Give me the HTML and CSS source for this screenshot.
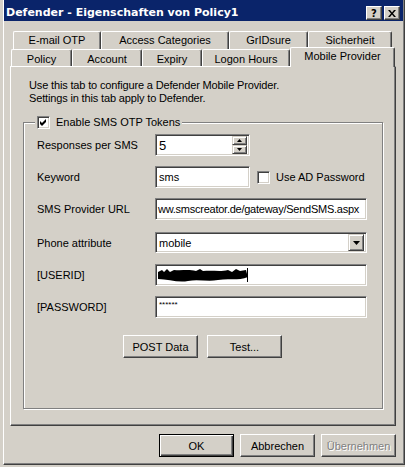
FILE: index.html
```html
<!DOCTYPE html>
<html lang="de">
<head>
    <meta charset="UTF-8">
    <title>Defender - Eigenschaften von Policy1</title>
    <link rel="stylesheet" href="styles.css">
</head>
<body>
    <div class="dialog">
        <div class="titlebar">
            <span class="title">Defender - Eigenschaften von Policy1</span>
            <div class="caption-buttons">
                <button class="cap-btn help">?</button>
                <button class="cap-btn close">
                    <svg width="8" height="7" viewBox="0 0 8 7"><path d="M0 0h2l2 2.5L6 0h2L5 3.5 8 7H6L4 4.5 2 7H0l3-3.5z" fill="#000"/></svg>
                </button>
            </div>
        </div>

        <div class="tabs">
            <div class="tab-row back">
                <div class="tab t-email">E-mail OTP</div>
                <div class="tab t-access">Access Categories</div>
                <div class="tab t-grid">GrIDsure</div>
                <div class="tab t-sich">Sicherheit</div>
            </div>
            <div class="tab-row front">
                <div class="tab t-policy">Policy</div>
                <div class="tab t-account">Account</div>
                <div class="tab t-expiry">Expiry</div>
                <div class="tab t-logon">Logon Hours</div>
                <div class="tab t-mobile selected">Mobile Provider</div>
            </div>
        </div>

        <div class="panel">
            <p class="intro">Use this tab to configure a Defender Mobile Provider.<br>Settings in this tab apply to Defender.</p>

            <fieldset class="group">
                <legend><span class="check checked"></span>Enable SMS OTP Tokens</legend>

                <div class="field">
                    <label>Responses per SMS</label>
                    <div class="edit spin">
                        <span class="value">5</span>
                        <div class="spin-btns">
                            <span class="spin-btn"><svg width="5" height="3" viewBox="0 0 5 3"><path d="M2.5 0L5 3H0z"/></svg></span>
                            <span class="spin-btn"><svg width="5" height="3" viewBox="0 0 5 3"><path d="M0 0h5L2.5 3z"/></svg></span>
                        </div>
                    </div>
                </div>

                <div class="field">
                    <label>Keyword</label>
                    <div class="edit short"><span class="value">sms</span></div>
                    <span class="check"></span>
                    <span class="check-label">Use AD Password</span>
                </div>

                <div class="field">
                    <label>SMS Provider URL</label>
                    <div class="edit wide"><span class="value url">ww.smscreator.de/gateway/SendSMS.aspx</span></div>
                </div>

                <div class="field combo-row">
                    <label>Phone attribute</label>
                    <div class="edit wide combo">
                        <span class="value">mobile</span>
                        <span class="combo-btn"><svg width="7" height="4" viewBox="0 0 7 4"><path d="M0 0h7L3.5 4z"/></svg></span>
                    </div>
                </div>

                <div class="field">
                    <label>[USERID]</label>
                    <div class="edit wide">
                        <svg class="scribble" width="90" height="15" viewBox="0 0 90 15">
                            <path d="M0 4 L4 2 L6 4 L9 1 L12 4 L16 2 C24 3 30 1 38 3 L42 1 L45 3 C55 2 62 4 70 2 L74 4 L78 1 L82 3 L88 2 L89 6 L90 9 C80 13 70 10 60 12 S40 11 30 13 S10 11 0 11 Z" fill="#000"/>
                        </svg>
                        <span class="caret"></span>
                    </div>
                </div>

                <div class="field">
                    <label>[PASSWORD]</label>
                    <div class="edit wide"><span class="value stars">******</span></div>
                </div>

                <div class="group-buttons">
                    <button class="btn">POST Data</button>
                    <button class="btn">Test...</button>
                </div>
            </fieldset>
        </div>

        <div class="footer">
            <button class="btn default">OK</button>
            <button class="btn">Abbrechen</button>
            <button class="btn" disabled>Übernehmen</button>
        </div>
    </div>
</body>
</html>
```

FILE: styles.css
```css
body {
    margin: 0;
    background-color: #d4d0c8;
    font-family: "Liberation Sans", Arial, sans-serif;
    font-size: 11px;
    color: #000;
}

.dialog {
    width: 402px;
    height: 465px;
    margin-left: 3px;
    box-sizing: border-box;
    padding: 0 1px 0 0;
    border-left: 1px solid #fff;
    border-right: 1px solid #404040;
    border-bottom: 1px solid #404040;
    box-shadow: inset -1px -1px 0 #808080;
}

.titlebar {
    display: flex;
    align-items: center;
    height: 21px;
    padding: 0 3px 0 2px;
    background-color: #0a246a;
    color: #fff;
}

.title {
    flex: 1;
    font-family: "DejaVu Sans", sans-serif;
    font-weight: bold;
    font-size: 11px;
    padding-top: 4px;
}

.caption-buttons {
    display: flex;
    gap: 2px;
    padding-top: 5px;
}

.cap-btn {
    width: 16px;
    height: 14px;
    padding: 0;
    display: flex;
    align-items: center;
    justify-content: center;
    background-color: #d4d0c8;
    border: 1px solid;
    border-color: #fff #404040 #404040 #fff;
    box-shadow: inset -1px -1px 0 #808080;
    font-family: "DejaVu Sans", sans-serif;
    font-weight: bold;
    font-size: 10px;
    color: #000;
}

/* tabs */

.tabs {
    margin: 10px 7px 0 6px;
}

.tab-row {
    display: flex;
}

.tab-row.back {
    padding-left: 3px;
    height: 18px;
}

.tab-row.front {
    padding-left: 1px;
    height: 17px;
}

.tab {
    box-sizing: border-box;
    text-align: center;
    border-top: 1px solid #fff;
    border-left: 1px solid #fff;
    border-right: 1px solid #404040;
    border-radius: 2px 2px 0 0;
    box-shadow: inset -1px 0 0 #808080;
    line-height: 15px;
    padding-top: 1px;
    background-color: #d4d0c8;
}

.back .tab { height: 18px; }
.front .tab { height: 17px; padding-top: 2px; }

.t-email { width: 88px; }
.t-access { width: 128px; }
.t-grid { width: 79px; }
.t-sich { width: 84px; }
.t-policy { width: 61px; }
.t-account { width: 70px; }
.t-expiry { width: 60px; }
.t-logon { width: 88px; }

.front .tab.selected {
    width: 105px;
    height: 20px;
    margin-top: -2px;
    padding-top: 1px;
}

/* panel */

.panel {
    box-sizing: border-box;
    height: 360px;
    border: 1px solid;
    border-color: #fff #404040 #404040 #fff;
    box-shadow: inset -1px -1px 0 #808080;
    margin: 0 7px 0 6px;
    padding: 12px 0 0 18px;
}

.intro {
    margin: 0;
    line-height: 13px;
    letter-spacing: -0.15px;
}

.group {
    margin: 11px 0 0 -6px;
    width: 360px;
    box-sizing: border-box;
    height: 293px;
    padding: 5px 13px 0 13px;
    border: 1px solid #808080;
    box-shadow: 1px 1px 0 #fff, inset 1px 1px 0 #fff;
}

.group legend {
    display: flex;
    align-items: center;
    margin-left: -2px;
    padding: 0 2px;
    background-color: #d4d0c8;
    line-height: 13px;
}

.check {
    display: inline-block;
    width: 13px;
    height: 13px;
    box-sizing: border-box;
    margin-right: 6px;
    background-color: #fff;
    border: 1px solid;
    border-color: #808080 #fff #fff #808080;
    box-shadow: inset 1px 1px 0 #404040, inset -1px -1px 0 #d4d0c8;
}

.check.checked {
    background-image: url("data:image/svg+xml,%3Csvg xmlns='http://www.w3.org/2000/svg' width='11' height='11'%3E%3Cpath d='M2 4l2 2 4-4v3l-4 4-2-2z' fill='%23000'/%3E%3C/svg%3E");
    background-repeat: no-repeat;
    background-position: 0 0;
}

.field {
    display: flex;
    align-items: center;
    height: 22px;
    margin-bottom: 10px;
}

.field label {
    width: 118px;
}

.combo-row {
    margin-top: 12px;
    margin-bottom: 11px;
    height: 21px;
}

.edit {
    display: flex;
    align-items: center;
    box-sizing: border-box;
    height: 100%;
    background-color: #fff;
    border: 1px solid;
    border-color: #808080 #fff #fff #808080;
    box-shadow: inset 1px 1px 0 #404040, inset -1px -1px 0 #d4d0c8;
    padding: 0 3px;
    overflow: hidden;
    white-space: nowrap;
}

.edit.short,
.edit.spin {
    width: 95px;
}

.edit.wide {
    width: 212px;
}

.value {
    flex: 1;
}

.url {
    letter-spacing: -0.25px;
    margin-left: -1px;
}

.stars {
    font-size: 8px;
    align-self: flex-start;
    padding-top: 3px;
}

.spin {
    padding-right: 2px;
    font-size: 13px;
}

.spin-btns {
    display: flex;
    flex-direction: column;
    height: 18px;
}

.spin-btn,
.combo-btn {
    display: flex;
    align-items: center;
    justify-content: center;
    box-sizing: border-box;
    background-color: #d4d0c8;
    border: 1px solid;
    border-color: #d4d0c8 #404040 #404040 #d4d0c8;
    box-shadow: inset 1px 1px 0 #fff, inset -1px -1px 0 #808080;
}

.spin-btn {
    width: 15px;
    height: 9px;
}

.combo {
    padding-right: 2px;
}

.combo-btn {
    width: 16px;
    height: 17px;
}

.field .check {
    margin-left: 7px;
}

.scribble {
    margin-left: -1px;
}

.caret {
    width: 1px;
    height: 14px;
    margin-left: -1px;
    background-color: #000;
}

.btn {
    width: 75px;
    height: 23px;
    padding: 0;
    background-color: #d4d0c8;
    border: 1px solid;
    border-color: #fff #404040 #404040 #fff;
    box-shadow: inset -1px -1px 0 #808080, inset 1px 1px 0 #d4d0c8;
    font-family: "Liberation Sans", Arial, sans-serif;
    font-size: 11px;
    color: #000;
}

.btn.default {
    border: 1px solid #000;
    box-shadow: inset 1px 1px 0 #fff, inset -1px -1px 0 #404040, inset -2px -2px 0 #808080;
}

.btn:disabled {
    color: #808080;
    text-shadow: 1px 1px 0 #fff;
}

.group-buttons {
    display: flex;
    justify-content: center;
    gap: 9px;
    margin-top: 17px;
    margin-left: -1px;
}

.footer {
    display: flex;
    justify-content: flex-end;
    gap: 6px;
    margin: 8px 7px 0 0;
}
```
